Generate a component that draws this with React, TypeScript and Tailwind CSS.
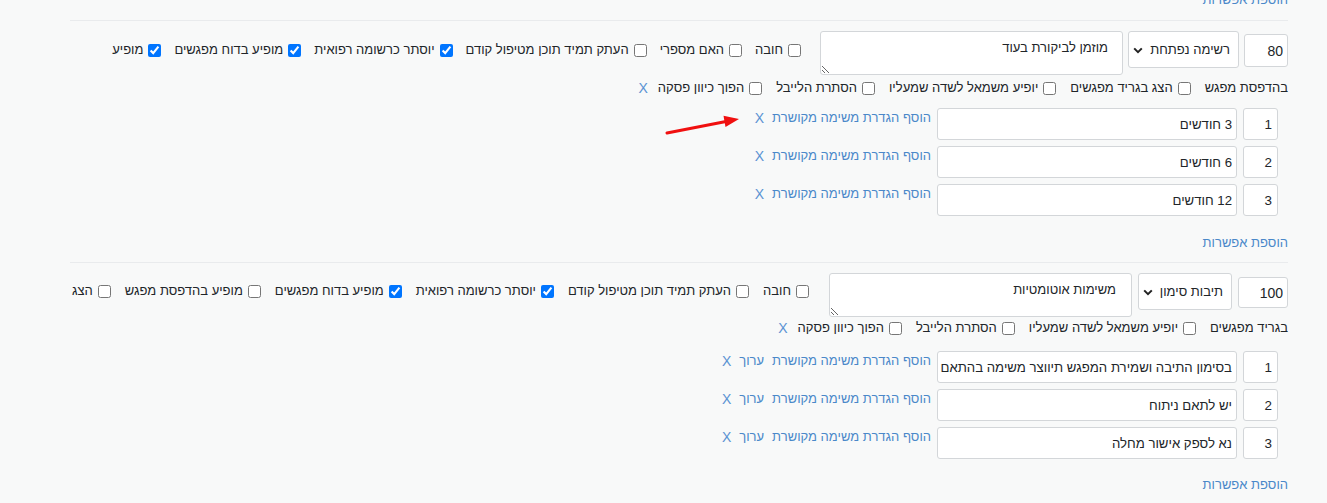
import React from 'react';

const LINK = 'text-[#4a88c9]';

function Check({ label, checked }: { label: string; checked?: boolean }) {
  return (
    <label className="flex items-center gap-[5px] whitespace-nowrap">
      <input type="checkbox" defaultChecked={checked} className="m-0 h-[13px] w-[13px] shrink-0" />
      <span>{label}</span>
    </label>
  );
}

function FakeSelect({ value, className }: { value: string; className: string }) {
  return (
    <div
      className={`flex h-[37px] shrink-0 items-center justify-between rounded-[3px] border border-[#d3d6d9] bg-white pr-[8px] pl-[4px] ${className}`}
    >
      <span className="whitespace-nowrap">{value}</span>
      <svg width="10" height="7" viewBox="0 0 10 7" className="mt-[1px] shrink-0">
        <path d="M1.2 1.4 L5 5.2 L8.8 1.4" fill="none" stroke="#222" strokeWidth="2" />
      </svg>
    </div>
  );
}

function OptionRow({ n, text, edit }: { n: number; text: string; edit?: boolean }) {
  return (
    <div className="flex items-start gap-[6px]">
      <input
        defaultValue={n}
        className="h-[32px] w-[35px] shrink-0 rounded-[3px] border border-[#d3d6d9] bg-white pr-[5px] text-right text-[13.4px] outline-none"
      />
      <input
        defaultValue={text}
        className="h-[32px] w-[300px] shrink-0 rounded-[3px] border border-[#d3d6d9] bg-white pr-[4px] text-[13.2px] outline-none"
      />
      <div className="flex items-start leading-5 whitespace-nowrap">
        <a className={`${LINK} text-[13px]`}>הוסף הגדרת משימה מקושרת</a>
        {edit && <a className={`${LINK} ms-[8px] text-[13px]`}>ערוך</a>}
        <a className="ms-[8px] text-[14px] text-[#5b93d3]">X</a>
      </div>
    </div>
  );
}

function AddOption({ className }: { className: string }) {
  return (
    <div className={`leading-5 ${className}`}>
      <a className={`${LINK} text-[13px]`}>הוספת אפשרות</a>
    </div>
  );
}

export default function App() {
  return (
    <div
      dir="rtl"
      className="relative h-[503px] w-full overflow-hidden bg-[#f8f9f9] font-['Liberation_Sans',Arial,sans-serif] text-[13px] text-[#212529]"
    >
      <div className="pr-[39px] pl-[70px]">
        <AddOption className="-mt-[10px]" />

        {/* block 1 */}
        <div className="mt-[10px] border-t border-[#e9ebed]" />
        <div className="mt-[10px] flex items-start">
          <input
            defaultValue="80"
            className="mt-[3px] h-[33px] w-[44px] shrink-0 rounded-[3px] border border-[#d3d6d9] bg-white pr-[4px] text-[14px] outline-none"
          />
          <FakeSelect value="רשימה נפתחת" className="ms-[5px] w-[111px]" />
          <textarea
            defaultValue="מוזמן לביקורת בעוד"
            className="ms-[5px] h-[44px] w-[303px] shrink-0 rounded-[3px] border border-[#d3d6d9] bg-white pt-[6px] pr-[14px] text-[13px] leading-5 outline-none"
          />
          <div className="ms-[19px] mt-[9px] flex items-center gap-[13px] leading-5">
            <Check label="חובה" />
            <Check label="האם מספרי" />
            <Check label="העתק תמיד תוכן מטיפול קודם" />
            <Check label="יוסתר כרשומה רפואית" checked />
            <Check label="מופיע בדוח מפגשים" checked />
            <Check label="מופיע" checked />
          </div>
        </div>
        <div className="mt-[3px] flex items-center gap-[14px] leading-5">
          <span>בהדפסת מפגש</span>
          <Check label="הצג בגריד מפגשים" />
          <Check label="יופיע משמאל לשדה שמעליו" />
          <Check label="הסתרת הלייבל" />
          <Check label="הפוך כיוון פסקה" />
          <a className="-ms-[4px] text-[14px] text-[#5b93d3]">X</a>
        </div>
        <div className="mt-[10px] flex flex-col gap-[6px] pr-[10px]">
          <OptionRow n={1} text="3 חודשים" />
          <OptionRow n={2} text="6 חודשים" />
          <OptionRow n={3} text="12 חודשים" />
        </div>
        <AddOption className="mt-[17px]" />

        {/* block 2 */}
        <div className="mt-[9px] border-t border-[#e9ebed]" />
        <div className="mt-[10px] flex items-start">
          <input
            defaultValue="100"
            className="mt-[4px] h-[31px] w-[50px] shrink-0 rounded-[3px] border border-[#d3d6d9] bg-white pr-[4px] text-[14px] outline-none"
          />
          <FakeSelect value="תיבות סימון" className="ms-[6px] w-[94px]" />
          <textarea
            defaultValue="משימות אוטומטיות"
            className="ms-[6px] h-[44px] w-[303px] shrink-0 rounded-[3px] border border-[#d3d6d9] bg-white pt-[6px] pr-[15px] text-[13px] leading-5 outline-none"
          />
          <div className="ms-[20px] mt-[8px] flex items-center gap-[14px] leading-5">
            <Check label="חובה" />
            <Check label="העתק תמיד תוכן מטיפול קודם" />
            <Check label="יוסתר כרשומה רפואית" checked />
            <Check label="מופיע בדוח מפגשים" checked />
            <Check label="מופיע בהדפסת מפגש" />
            <Check label="הצג" />
          </div>
        </div>
        <div className="mt-[1px] flex items-center gap-[14px] leading-5">
          <span>בגריד מפגשים</span>
          <Check label="יופיע משמאל לשדה שמעליו" />
          <Check label="הסתרת הלייבל" />
          <Check label="הפוך כיוון פסקה" />
          <a className="-ms-[4px] text-[14px] text-[#5b93d3]">X</a>
        </div>
        <div className="mt-[13px] flex flex-col gap-[6px] pr-[10px]">
          <OptionRow n={1} text="בסימון התיבה ושמירת המפגש תיווצר משימה בהתאם" edit />
          <OptionRow n={2} text="יש לתאם ניתוח" edit />
          <OptionRow n={3} text="נא לספק אישור מחלה" edit />
        </div>
        <AddOption className="mt-[16px]" />
      </div>

      {/* annotation arrow */}
      <svg className="pointer-events-none absolute top-0 left-0" width="1327" height="503">
        <line x1="667" y1="133" x2="726" y2="121.5" stroke="#f01010" strokeWidth="3" strokeLinecap="round" />
        <polygon points="739,119 723.5,115.8 725.5,127" fill="#f01010" />
      </svg>
    </div>
  );
}
